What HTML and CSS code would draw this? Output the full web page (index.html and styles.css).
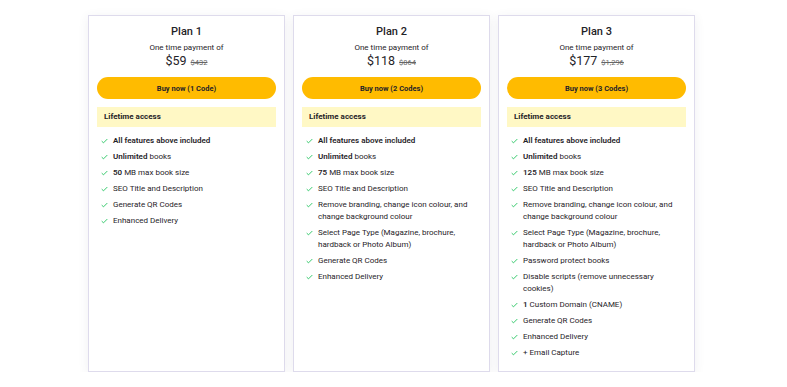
FILE: index.html
```html
<!DOCTYPE html>
<html lang="en">
<head>
    <meta charset="UTF-8">
    <meta name="viewport" content="width=device-width, initial-scale=1.0">
    <title>Pricing</title>
    <link rel="stylesheet" href="styles.css">
</head>
<body>
    <div class="plans">
        <div class="plan">
            <h2>Plan 1</h2>
            <p class="once">One time payment of</p>
            <p class="price">$59 <s>$432</s></p>
            <button class="buy-btn">Buy now (1 Code)</button>
            <div class="access">Lifetime access</div>
            <ul class="features">
                <li><svg viewBox="0 0 10 8"><polyline points="1,4.2 3.6,6.6 9,1.2"/></svg><span><b>All features above included</b></span></li>
                <li><svg viewBox="0 0 10 8"><polyline points="1,4.2 3.6,6.6 9,1.2"/></svg><span><b>Unlimited</b> books</span></li>
                <li><svg viewBox="0 0 10 8"><polyline points="1,4.2 3.6,6.6 9,1.2"/></svg><span><b>50</b> MB max book size</span></li>
                <li><svg viewBox="0 0 10 8"><polyline points="1,4.2 3.6,6.6 9,1.2"/></svg><span>SEO Title and Description</span></li>
                <li><svg viewBox="0 0 10 8"><polyline points="1,4.2 3.6,6.6 9,1.2"/></svg><span>Generate QR Codes</span></li>
                <li><svg viewBox="0 0 10 8"><polyline points="1,4.2 3.6,6.6 9,1.2"/></svg><span>Enhanced Delivery</span></li>
            </ul>
        </div>
        <div class="plan">
            <h2>Plan 2</h2>
            <p class="once">One time payment of</p>
            <p class="price">$118 <s>$864</s></p>
            <button class="buy-btn">Buy now (2 Codes)</button>
            <div class="access">Lifetime access</div>
            <ul class="features">
                <li><svg viewBox="0 0 10 8"><polyline points="1,4.2 3.6,6.6 9,1.2"/></svg><span><b>All features above included</b></span></li>
                <li><svg viewBox="0 0 10 8"><polyline points="1,4.2 3.6,6.6 9,1.2"/></svg><span><b>Unlimited</b> books</span></li>
                <li><svg viewBox="0 0 10 8"><polyline points="1,4.2 3.6,6.6 9,1.2"/></svg><span><b>75</b> MB max book size</span></li>
                <li><svg viewBox="0 0 10 8"><polyline points="1,4.2 3.6,6.6 9,1.2"/></svg><span>SEO Title and Description</span></li>
                <li><svg viewBox="0 0 10 8"><polyline points="1,4.2 3.6,6.6 9,1.2"/></svg><span>Remove branding, change icon colour, and change background colour</span></li>
                <li><svg viewBox="0 0 10 8"><polyline points="1,4.2 3.6,6.6 9,1.2"/></svg><span>Select Page Type (Magazine, brochure, hardback or Photo Album)</span></li>
                <li><svg viewBox="0 0 10 8"><polyline points="1,4.2 3.6,6.6 9,1.2"/></svg><span>Generate QR Codes</span></li>
                <li><svg viewBox="0 0 10 8"><polyline points="1,4.2 3.6,6.6 9,1.2"/></svg><span>Enhanced Delivery</span></li>
            </ul>
        </div>
        <div class="plan">
            <h2>Plan 3</h2>
            <p class="once">One time payment of</p>
            <p class="price">$177 <s>$1,296</s></p>
            <button class="buy-btn">Buy now (3 Codes)</button>
            <div class="access">Lifetime access</div>
            <ul class="features">
                <li><svg viewBox="0 0 10 8"><polyline points="1,4.2 3.6,6.6 9,1.2"/></svg><span><b>All features above included</b></span></li>
                <li><svg viewBox="0 0 10 8"><polyline points="1,4.2 3.6,6.6 9,1.2"/></svg><span><b>Unlimited</b> books</span></li>
                <li><svg viewBox="0 0 10 8"><polyline points="1,4.2 3.6,6.6 9,1.2"/></svg><span><b>125</b> MB max book size</span></li>
                <li><svg viewBox="0 0 10 8"><polyline points="1,4.2 3.6,6.6 9,1.2"/></svg><span>SEO Title and Description</span></li>
                <li><svg viewBox="0 0 10 8"><polyline points="1,4.2 3.6,6.6 9,1.2"/></svg><span>Remove branding, change icon colour, and change background colour</span></li>
                <li><svg viewBox="0 0 10 8"><polyline points="1,4.2 3.6,6.6 9,1.2"/></svg><span>Select Page Type (Magazine, brochure, hardback or Photo Album)</span></li>
                <li><svg viewBox="0 0 10 8"><polyline points="1,4.2 3.6,6.6 9,1.2"/></svg><span>Password protect books</span></li>
                <li><svg viewBox="0 0 10 8"><polyline points="1,4.2 3.6,6.6 9,1.2"/></svg><span>Disable scripts (remove unnecessary cookies)</span></li>
                <li><svg viewBox="0 0 10 8"><polyline points="1,4.2 3.6,6.6 9,1.2"/></svg><span><b>1</b> Custom Domain (CNAME)</span></li>
                <li><svg viewBox="0 0 10 8"><polyline points="1,4.2 3.6,6.6 9,1.2"/></svg><span>Generate QR Codes</span></li>
                <li><svg viewBox="0 0 10 8"><polyline points="1,4.2 3.6,6.6 9,1.2"/></svg><span>Enhanced Delivery</span></li>
                <li><svg viewBox="0 0 10 8"><polyline points="1,4.2 3.6,6.6 9,1.2"/></svg><span>+ Email Capture</span></li>
            </ul>
        </div>
    </div>
</body>
</html>
```

FILE: styles.css
```css
body {
    margin: 0;
    font-family: Roboto, sans-serif;
    color: #1f2328;
    background: #fff;
}
.plans {
    display: flex;
    gap: 8px;
    padding: 15px 0 0 88px;
}
.plan {
    width: 197px;
    box-sizing: border-box;
    border: 1px solid #dedbec;
    box-shadow: 0 2px 10px rgba(60, 60, 90, 0.08);
    padding: 9px 8px 12px;
    display: flex;
    flex-direction: column;
}
.plan h2 {
    margin: 0;
    font-size: 11px;
    font-weight: 500;
    line-height: 13px;
    text-align: center;
}
.once {
    margin: 5px 0 0;
    font-size: 8px;
    line-height: 10px;
    text-align: center;
}
.price {
    margin: 0;
    height: 15px;
    display: flex;
    justify-content: center;
    align-items: baseline;
    gap: 4px;
    font-size: 12.5px;
    line-height: 15px;
}
.price s {
    font-size: 7.5px;
    color: #666;
}
.buy-btn {
    margin-top: 9px;
    height: 22px;
    border: none;
    border-radius: 11px;
    background-color: #ffbb00;
    color: #1f2328;
    font-family: Roboto, sans-serif;
    font-size: 7.5px;
    font-weight: 700;
    cursor: pointer;
}
.access {
    margin-top: 8px;
    height: 20px;
    line-height: 20px;
    padding: 0 7px;
    background-color: #fff8c5;
    font-size: 8px;
    font-weight: 700;
}
.features {
    list-style: none;
    margin: 8px 0 0;
    padding: 0 0 0 4px;
    display: flex;
    flex-direction: column;
    gap: 4px;
}
.features li {
    display: flex;
    align-items: flex-start;
    gap: 5px;
    font-size: 8px;
    line-height: 12px;
}
.features svg {
    flex: none;
    width: 7px;
    height: 6px;
    margin-top: 3px;
    fill: none;
    stroke: #22c55e;
    stroke-width: 1.3;
}
.features b {
    font-weight: 600;
}
```
